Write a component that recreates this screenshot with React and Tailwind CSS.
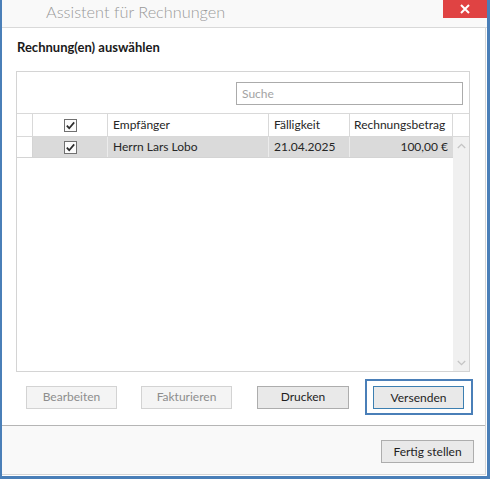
import React from "react";

const FONT = { fontFamily: 'Lato, "Noto Sans", sans-serif' };

function Check() {
  return (
    <svg width="13" height="13" viewBox="0 0 13 13" className="block">
      <rect x="0.5" y="0.5" width="12" height="12" fill="#fbfbfb" stroke="#707070" />
      <path d="M2.8 6.6 L5.2 9.2 L10.2 3.4" fill="none" stroke="#2b2b2b" strokeWidth="1.7" />
    </svg>
  );
}

function Chevron({ up }) {
  return (
    <svg width="9" height="6" viewBox="0 0 9 6" className="block">
      <path
        d={up ? "M0.8 5 L4.5 1.3 L8.2 5" : "M0.8 1 L4.5 4.7 L8.2 1"}
        fill="none"
        stroke="#c4c4c4"
        strokeWidth="1.3"
      />
    </svg>
  );
}

function Btn({ children, disabled, focused, w = "w-[91px]" }) {
  const base = `${w} h-[23px] flex items-center justify-center text-[12px] leading-none border`;
  if (disabled)
    return <div className={`${base} bg-[#f4f4f4] border-[#d3d3d3] text-[#8d8d8d]`}>{children}</div>;
  if (focused)
    return <div className={`${base} bg-[#e9e9e9] border-[#3c7fb1] text-[#1e1e1e]`}>{children}</div>;
  return <div className={`${base} bg-[#e9e9e9] border-[#adadad] text-[#1e1e1e]`}>{children}</div>;
}

export default function App() {
  return (
    <div
      className="w-[490px] h-[479px] bg-[#4a7fb8] pl-[2px] pr-[3px] pb-[3px] flex flex-col text-[#262626]"
      style={FONT}
    >
      {/* title bar */}
      <div className="h-[28px] shrink-0 bg-[#f9f9f9] border-b border-[#d9d9d9] flex items-start justify-between">
        <div className="pl-[44px] pt-[1px] text-[16.3px] leading-[22px] font-light text-[#9a9a9a]">
          Assistent für Rechnungen
        </div>
        <div className="w-[44px] h-[18px] bg-[#e04343] flex items-center justify-center">
          <svg width="10" height="10" viewBox="0 0 10 10" className="block">
            <path d="M1 1 L9 9 M9 1 L1 9" stroke="#ffffff" strokeWidth="2" />
          </svg>
        </div>
      </div>

      {/* body wrapper */}
      <div className="flex-1 flex flex-col bg-white pr-px pb-px">
        <div className="flex-1 flex flex-col border-r border-b border-[#d6d6d6]">
          {/* content */}
          <div className="flex-1 flex flex-col">
            <div className="pl-[15px] pt-[11px] text-[13px] leading-[16px] font-bold text-[#1a1a1a]">
              Rechnung(en) auswählen
            </div>

            {/* grid panel */}
            <div className="ml-[14px] mt-[16px] w-[454px] h-[301px] border border-[#d4d4d4] flex flex-col">
              <div className="pt-[10px] pr-[6px] flex justify-end">
                <div className="w-[227px] h-[23px] border border-[#ababab] flex items-center pl-[5px] text-[12px] text-[#a3a3a3]">
                  Suche
                </div>
              </div>

              {/* header */}
              <div className="mt-[8px] h-[24px] border-t border-b border-[#d9d9d9] flex text-[12px]">
                <div className="w-[16px] border-r border-[#d9d9d9]" />
                <div className="w-[75px] border-r border-[#d9d9d9] flex items-center justify-center">
                  <Check />
                </div>
                <div className="w-[161px] border-r border-[#d9d9d9] flex items-center pl-[5px]">Empfänger</div>
                <div className="w-[81px] border-r border-[#d9d9d9] flex items-center pl-[5px]">Fälligkeit</div>
                <div className="w-[103px] border-r border-[#d9d9d9] flex items-center pl-[4px]">
                  Rechnungsbetrag
                </div>
                <div className="flex-1" />
              </div>

              {/* body */}
              <div className="flex-1 flex">
                <div className="w-[436px] flex flex-col">
                  <div className="h-[21px] border-b border-[#d4d4d4] flex text-[12px]">
                    <div className="w-[16px] border-r border-[#d4d4d4] bg-white" />
                    <div className="w-[75px] bg-[#dadada] border-r border-[#ececec] flex items-center justify-center">
                      <Check />
                    </div>
                    <div className="w-[161px] bg-[#dadada] border-r border-[#ececec] flex items-center pl-[5px]">
                      Herrn Lars Lobo
                    </div>
                    <div className="w-[81px] bg-[#dadada] border-r border-[#ececec] flex items-center pl-[5px]">
                      21.04.2025
                    </div>
                    <div className="flex-1 bg-[#dadada] flex items-center justify-end pr-[5px]">100,00 €</div>
                  </div>
                  <div className="flex-1" />
                </div>
                <div className="flex-1 bg-[#f0f0f0] flex flex-col items-center justify-between pt-[6px] pb-[5px]">
                  <Chevron up />
                  <Chevron />
                </div>
              </div>
            </div>

            {/* buttons */}
            <div className="mt-[7px] h-[36px] pl-[24px] flex items-center">
              <Btn disabled>Bearbeiten</Btn>
              <div className="ml-[24px]">
                <Btn disabled>Fakturieren</Btn>
              </div>
              <div className="ml-[25px]">
                <Btn w="w-[92px]">Drucken</Btn>
              </div>
              <div className="ml-[16px] w-[108px] h-[36px] border-2 border-[#4a7fb8] pl-[6px] pt-[5px]">
                <Btn focused>Versenden</Btn>
              </div>
            </div>
          </div>

          {/* footer */}
          <div className="h-[49px] shrink-0 border-t border-[#b5b5b5] bg-[#f9f9f9] flex justify-end items-start pt-[14px] pr-[11px]">
            <Btn w="w-[93px]">Fertig stellen</Btn>
          </div>
        </div>
      </div>
    </div>
  );
}
